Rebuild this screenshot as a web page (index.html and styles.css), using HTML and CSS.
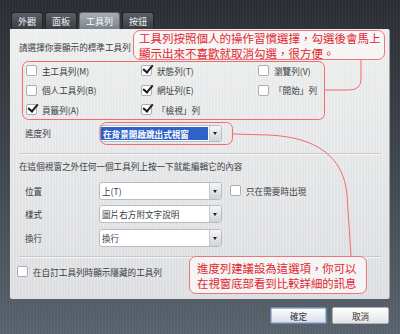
FILE: index.html
```html
<!DOCTYPE html>
<html lang="zh-Hant">
  <head>
    <meta charset="UTF-8" />
    <title>工具列設定</title>
    <link rel="stylesheet" href="styles.css">
  </head>
  <body>
    <div class="window">
      <div class="tabs">
        <div class="tab">外觀</div>
        <div class="tab">面板</div>
        <div class="tab active">工具列</div>
        <div class="tab">按鈕</div>
      </div>

      <div class="panel">
        <div class="heading">請選擇你要顯示的標準工具列</div>
        <div class="check-grid">
          <label class="check"><span class="box"></span>主工具列(M)</label>
          <label class="check"><span class="box on"></span>狀態列(T)</label>
          <label class="check"><span class="box"></span>瀏覽列(V)</label>
          <label class="check"><span class="box"></span>個人工具列(B)</label>
          <label class="check"><span class="box on"></span>網址列(E)</label>
          <label class="check"><span class="box"></span>「開始」列</label>
          <label class="check"><span class="box on"></span>頁籤列(A)</label>
          <label class="check"><span class="box on"></span>「檢視」列</label>
        </div>

        <div class="field-row progress-row">
          <span class="field-label">進度列</span>
          <div class="select"><span class="value selected">在背景開啟跳出式視窗</span><span class="drop"></span></div>
        </div>

        <div class="sep"></div>

        <div class="heading second">在這個視窗之外任何一個工具列上按一下就能編輯它的內容</div>
        <div class="field-list">
          <div class="field-row">
            <span class="field-label">位置</span>
            <div class="select"><span class="value">上(T)</span><span class="drop"></span></div>
            <label class="check inline"><span class="box"></span>只在需要時出現</label>
          </div>
          <div class="field-row">
            <span class="field-label">樣式</span>
            <div class="select"><span class="value">圖片右方附文字說明</span><span class="drop"></span></div>
          </div>
          <div class="field-row">
            <span class="field-label">換行</span>
            <div class="select"><span class="value">換行</span><span class="drop"></span></div>
          </div>
        </div>

        <div class="sep bottom"></div>

        <label class="check last"><span class="box"></span>在自訂工具列時顯示隱藏的工具列</label>
      </div>

      <div class="buttons">
        <button class="btn default">確定</button>
        <button class="btn">取消</button>
      </div>
    </div>

    <!-- annotations drawn over the dialog -->
    <svg class="marks" width="400" height="334" viewBox="0 0 400 334">
      <rect x="22.5" y="61.5" width="302" height="58" rx="6" />
      <rect x="100.5" y="122.5" width="132" height="22" rx="6" />
      <path d="M361 59 V79 Q361 90 349 90 H325" />
      <path d="M233 134 L268 135 C318 137 344 158 347 195 L351 256" />
    </svg>
    <div class="note note-top">工具列按照個人的操作習慣選擇，勾選後會馬上<br>顯示出來不喜歡就取消勾選，很方便。</div>
    <div class="note note-bottom">進度列建議設為這選項，你可以<br>在視窗底部看到比較詳細的訊息</div>
  </body>
</html>
```

FILE: styles.css
```css
body {
  margin: 0;
  width: 400px;
  height: 334px;
  overflow: hidden;
  position: relative;
  font-family: "Noto Sans CJK TC", "Noto Sans", sans-serif;
  background:
    repeating-linear-gradient(90deg, rgba(255, 255, 255, 0.035) 0 1px, transparent 1px 3px),
    linear-gradient(#2a2e33, #3d434a 45%, #58626d);
}
.window {
  padding: 12px 10px 0 10px;
}
.tabs {
  display: flex;
  gap: 2px;
  height: 17px;
  padding-left: 1px;
}
.tab {
  padding: 0 6px;
  min-width: 19px;
  text-align: center;
  font-size: 9px;
  line-height: 17px;
  color: #f1f2f3;
  border: 1px solid #23272b;
  border-bottom: none;
  border-radius: 3px 3px 0 0;
  background: linear-gradient(#5a6067, #393e44);
  box-sizing: border-box;
}
.tab.active {
  background: linear-gradient(#a9afb6, #7a818a);
  border-color: #5d636a;
  color: #fff;
}
.panel {
  height: 270px;
  box-sizing: border-box;
  padding: 12px 8px 0 9px;
  border-radius: 0 2px 2px 2px;
  border-right: 1px solid #9a9fa6;
  color: #3a3c3f;
  font-size: 8.6px;
  background:
    repeating-linear-gradient(90deg, rgba(255, 255, 255, 0.25) 0 1px, transparent 1px 3px),
    linear-gradient(#eceded, #dcdddf);
}
.heading {
  line-height: 12px;
}
.heading.second {
  margin-top: 5px;
}
.check-grid {
  display: grid;
  grid-template-columns: 115px 117px 1fr;
  grid-auto-rows: 19.5px;
  margin: 8px 0 0 7px;
}
.check {
  display: flex;
  align-items: center;
  gap: 5px;
  line-height: 12px;
}
.box {
  position: relative;
  width: 9px;
  height: 9px;
  border: 1px solid #a9adb2;
  border-radius: 2px;
  background: #fff;
  flex: none;
}
.box.on::after {
  content: "";
  position: absolute;
  left: 1px;
  top: -1px;
  width: 8px;
  height: 4px;
  border-left: 2px solid #1c1c1c;
  border-bottom: 2px solid #1c1c1c;
  transform: rotate(-50deg);
}
.field-row {
  display: flex;
  align-items: center;
  height: 18px;
}
.progress-row {
  margin-top: 5px;
  height: 17px;
}
.field-label {
  width: 80px;
  padding-left: 6px;
  box-sizing: border-box;
}
.select {
  display: flex;
  width: 123px;
  height: 100%;
  box-sizing: border-box;
  border: 1px solid #b9bdc2;
  border-radius: 3px;
  background: #fff;
  overflow: hidden;
}
.value {
  flex: 1;
  padding-left: 2px;
  line-height: 16px;
}
.selected {
  margin: 1px;
  padding-left: 2px;
  background: #2f62c8;
  color: #fff;
  font-weight: bold;
  line-height: 14px;
}
.drop {
  position: relative;
  width: 11px;
  border-left: 1px solid #c4c7cb;
  background: linear-gradient(#f6f6f7, #d0d3d7);
}
.drop::after {
  content: "";
  position: absolute;
  left: 3px;
  top: 50%;
  margin-top: -1px;
  border: 2.5px solid transparent;
  border-top: 3px solid #222;
  border-bottom: none;
}
.sep {
  margin-top: 11px;
  border-top: 1px solid #c6c8cb;
  border-bottom: 1px solid #f6f6f7;
}
.sep.bottom {
  margin-top: 9px;
}
.field-list {
  display: flex;
  flex-direction: column;
  gap: 5.5px;
  margin-top: 10px;
}
.check.inline {
  margin-left: 8px;
}
.check.last {
  margin: 8px 0 0 -2px;
}
.buttons {
  display: flex;
  justify-content: flex-end;
  gap: 5px;
  margin-top: 8px;
  padding-right: 1px;
}
.btn {
  width: 57px;
  height: 17px;
  padding: 0;
  font-family: inherit;
  font-size: 8.6px;
  color: #333;
  border: 1px solid #aeb2b7;
  border-radius: 2px;
  background: linear-gradient(#ffffff, #e2e3e5);
}
.btn.default {
  border-color: #6f86a6;
  box-shadow: inset 0 0 0 1px #a9bbd3;
  background: linear-gradient(#ffffff, #d5dfec);
}
.marks {
  position: absolute;
  left: 0;
  top: 0;
  fill: none;
  stroke: #f06b6e;
  stroke-width: 1;
}
.note {
  position: absolute;
  box-sizing: border-box;
  border: 1px solid #f07477;
  border-radius: 7px;
  background: rgba(246, 246, 247, 0.9);
  color: #e3262d;
  font-size: 11.5px;
  line-height: 14.5px;
  letter-spacing: 0;
  white-space: nowrap;
}
.note-top {
  left: 133px;
  top: 30px;
  width: 252px;
  height: 30px;
  padding: 0 0 0 5px;
}
.note-bottom {
  left: 189px;
  top: 256px;
  width: 178px;
  height: 38px;
  padding: 4px 0 0 7px;
  font-size: 11.4px;
}
```
